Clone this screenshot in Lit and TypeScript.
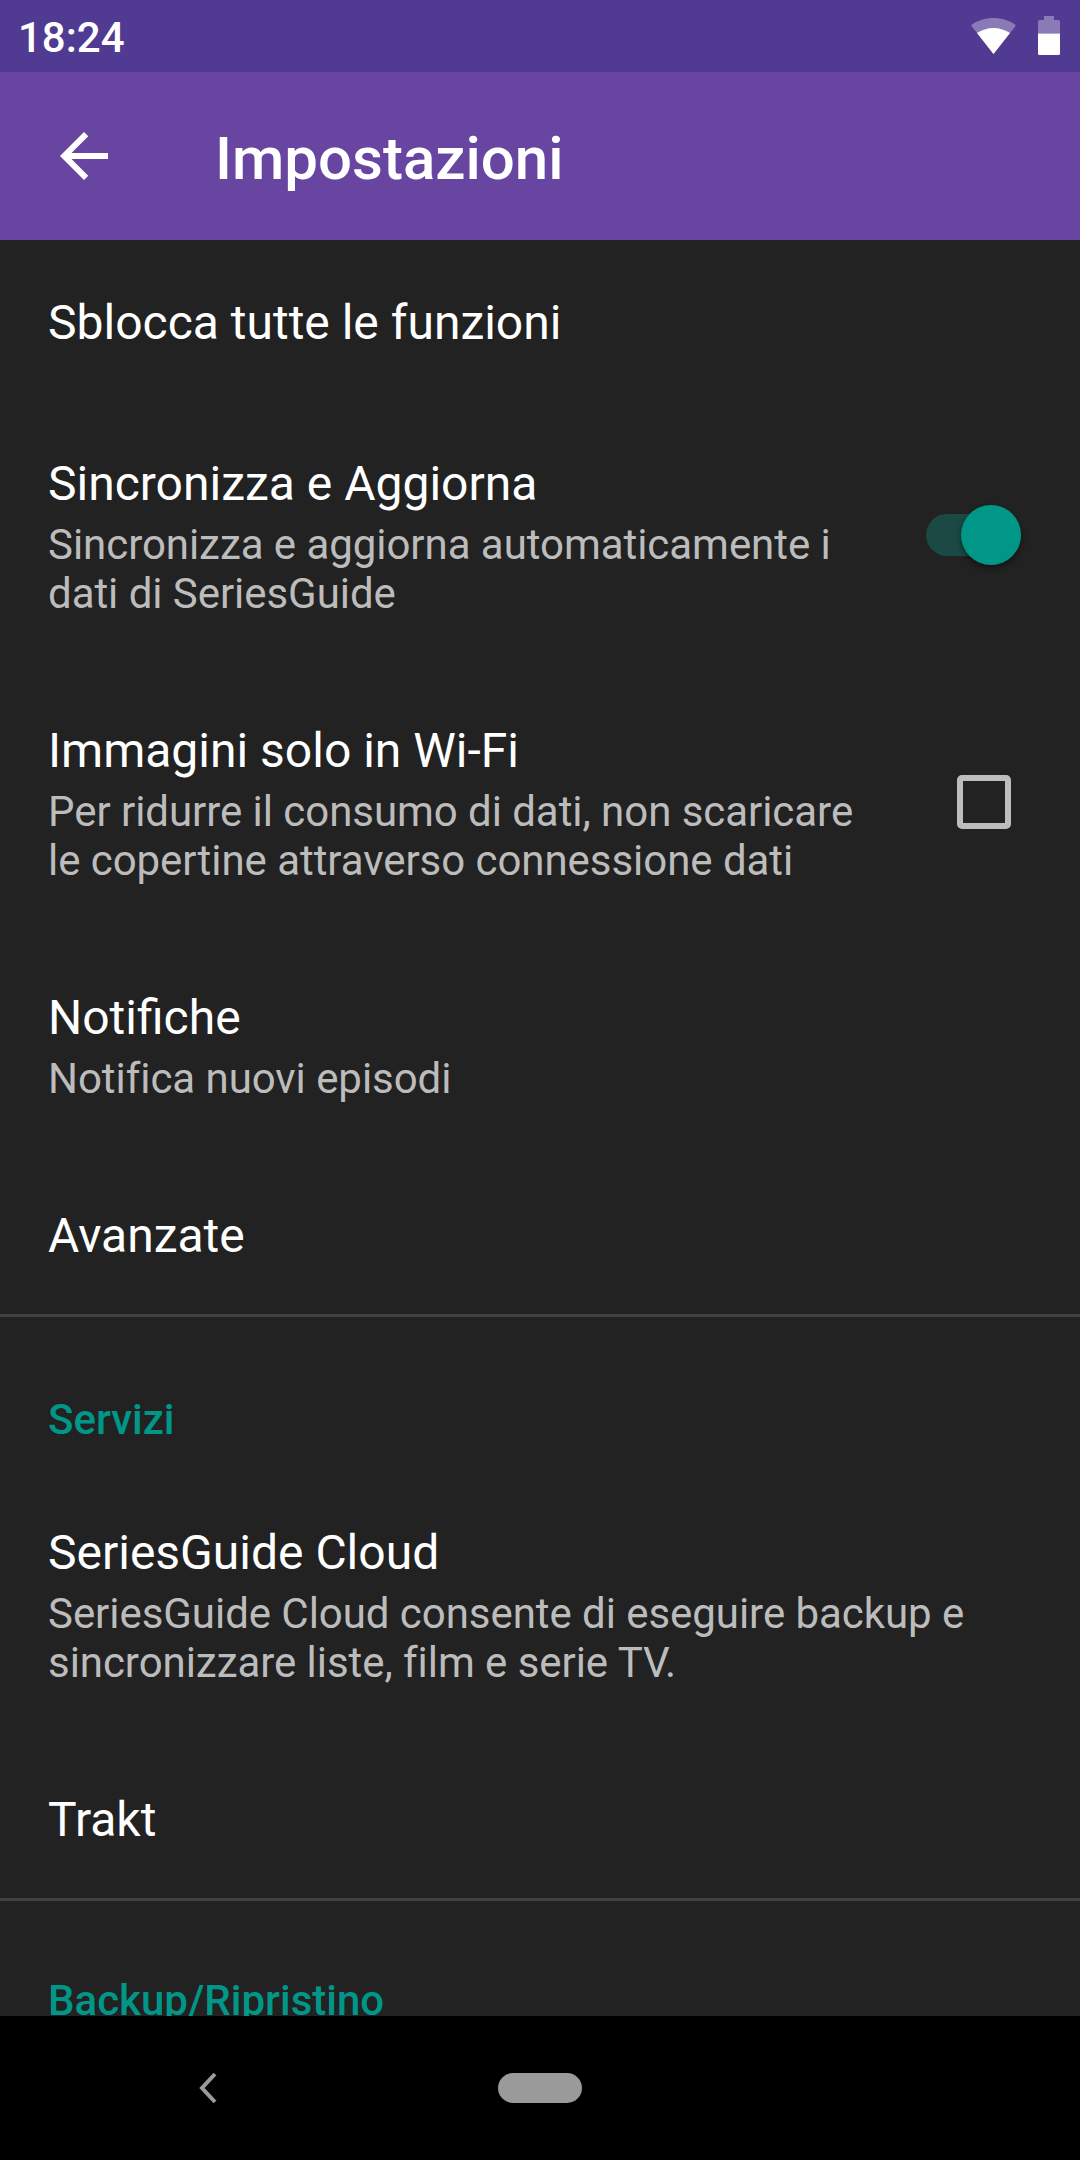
import {LitElement, html, css, nothing} from 'lit';
import {customElement} from 'lit/decorators.js';

type Pref = {
    title: string;
    summary?: string[];
    control?: 'switch' | 'checkbox';
};

const GENERAL: Pref[] = [
    {title: 'Sblocca tutte le funzioni'},
    {
        title: 'Sincronizza e Aggiorna',
        summary: ['Sincronizza e aggiorna automaticamente i', 'dati di SeriesGuide'],
        control: 'switch',
    },
    {
        title: 'Immagini solo in Wi-Fi',
        summary: ['Per ridurre il consumo di dati, non scaricare', 'le copertine attraverso connessione dati'],
        control: 'checkbox',
    },
    {title: 'Notifiche', summary: ['Notifica nuovi episodi']},
    {title: 'Avanzate'},
];

const SERVICES: Pref[] = [
    {
        title: 'SeriesGuide Cloud',
        summary: ['SeriesGuide Cloud consente di eseguire backup e', 'sincronizzare liste, film e serie TV.'],
    },
    {title: 'Trakt'},
];

@customElement('app-root')
export class AppRoot extends LitElement {
    static styles = css`
        :host {
            display: block;
            font-family: Roboto, "Liberation Sans", sans-serif;
        }

        .screen {
            display: flex;
            flex-direction: column;
            width: 1080px;
            height: 2160px;
            overflow: hidden;
            background: #222222;
        }

        .status {
            flex: none;
            display: flex;
            align-items: center;
            justify-content: space-between;
            height: 72px;
            padding: 0 20px 0 18px;
            background: #513a92;
            color: #fff;
        }

        .time {
            margin-top: 3px;
            font-size: 42px;
            font-weight: 500;
        }

        .status-icons {
            display: flex;
            align-items: center;
            gap: 22px;
            padding-bottom: 1px;
        }

        .status-icons svg {
            display: block;
        }

        .toolbar {
            flex: none;
            display: flex;
            align-items: center;
            height: 168px;
            padding-left: 48px;
            background: #6745a1;
            color: #fff;
        }

        .back {
            display: block;
            flex: none;
        }

        .title {
            margin: 5px 0 0 95px;
            font-size: 60px;
            font-weight: 500;
        }

        .list {
            flex: 1;
            min-height: 0;
            overflow: hidden;
        }

        .pref {
            display: flex;
            align-items: center;
            padding: 50px 48px 45px;
        }

        .pref.with-summary {
            padding-bottom: 50px;
        }

        .pref-text {
            flex: 1;
            min-width: 0;
        }

        .pref-title {
            font-size: 48px;
            line-height: 66px;
            color: #fff;
        }

        .pref-summary {
            margin-top: 3px;
            font-size: 42px;
            line-height: 49px;
            letter-spacing: -0.05px;
            color: #bcbcbc;
        }

        .control {
            flex: none;
            display: flex;
            justify-content: flex-end;
            width: 106px;
        }

        .switch {
            position: relative;
            flex: none;
            width: 95px;
            height: 42px;
            margin-right: 11px;
            border-radius: 21px;
            background: #1b4a45;
        }

        .switch::after {
            content: "";
            position: absolute;
            top: -9px;
            right: 0;
            width: 60px;
            height: 60px;
            border-radius: 50%;
            background: #009688;
            box-shadow: 0 3px 6px rgba(0, 0, 0, 0.45);
        }

        .checkbox {
            box-sizing: border-box;
            width: 54px;
            height: 54px;
            margin-right: 21px;
            border: 6px solid #bdbdbd;
            border-radius: 5px;
        }

        .divider {
            height: 3px;
            background: #424242;
        }

        .category {
            padding: 78px 48px 26px;
            font-size: 42px;
            font-weight: 500;
            line-height: 49px;
            color: #009688;
        }

        .category.last {
            padding-top: 75px;
        }

        .nav {
            flex: none;
            display: flex;
            align-items: center;
            height: 144px;
            background: #000;
        }

        .nav-back {
            display: block;
            margin-left: 196px;
        }

        .nav-home {
            width: 84px;
            height: 30px;
            margin-left: 278px;
            border-radius: 15px;
            background: #9a9a9a;
        }
    `;

    private renderControl(control?: Pref['control']) {
        if (!control) return nothing;
        return html`
            <div class="control">
                <div class="${control}"></div>
            </div>
        `;
    }

    private renderPref(pref: Pref) {
        return html`
            <div class="pref ${pref.summary ? 'with-summary' : ''}">
                <div class="pref-text">
                    <div class="pref-title">${pref.title}</div>
                    ${pref.summary
                        ? html`<div class="pref-summary">${pref.summary.map((line) => html`<div>${line}</div>`)}</div>`
                        : nothing}
                </div>
                ${this.renderControl(pref.control)}
            </div>
        `;
    }

    render() {
        return html`
            <div class="screen">
                <div class="status">
                    <span class="time">18:24</span>
                    <div class="status-icons">
                        <svg width="45" height="36" viewBox="0 0 45 36">
                            <path d="M22.5 36 L0.5 8 Q0 7 1 6.5 C7 2.5 14 0 22.5 0 C31 0 38 2.5 44 6.5 Q45 7 44.5 8 Z" fill="#fff" fill-opacity="0.33"/>
                            <path d="M22.5 36 L6 15 C10.5 12 16.5 10 22.5 10 C28.5 10 34.5 12 39 15 Z" fill="#fff"/>
                        </svg>
                        <svg width="22" height="39" viewBox="0 0 22 39">
                            <path d="M6 0 H16 V4 H20.5 Q22 4 22 5.5 V17.5 H0 V5.5 Q0 4 1.5 4 H6 Z" fill="#fff" fill-opacity="0.33"/>
                            <path d="M0 17.5 H22 V37.5 Q22 39 20.5 39 H1.5 Q0 39 0 37.5 Z" fill="#fff"/>
                        </svg>
                    </div>
                </div>
                <div class="toolbar">
                    <svg class="back" width="72" height="72" viewBox="0 0 24 24">
                        <path d="M20 11H7.83l5.59-5.59L12 4l-8 8 8 8 1.41-1.41L7.83 13H20v-2z" fill="#fff"/>
                    </svg>
                    <div class="title">Impostazioni</div>
                </div>
                <div class="list">
                    ${GENERAL.map((pref) => this.renderPref(pref))}
                    <div class="divider"></div>
                    <div class="category">Servizi</div>
                    ${SERVICES.map((pref) => this.renderPref(pref))}
                    <div class="divider"></div>
                    <div class="category last">Backup/Ripristino</div>
                </div>
                <div class="nav">
                    <svg class="nav-back" width="24" height="34" viewBox="0 0 24 34">
                        <path d="M19 3 L6 17 L19 31" fill="none" stroke="#9a9a9a" stroke-width="4"/>
                    </svg>
                    <div class="nav-home"></div>
                </div>
            </div>
        `;
    }
}
